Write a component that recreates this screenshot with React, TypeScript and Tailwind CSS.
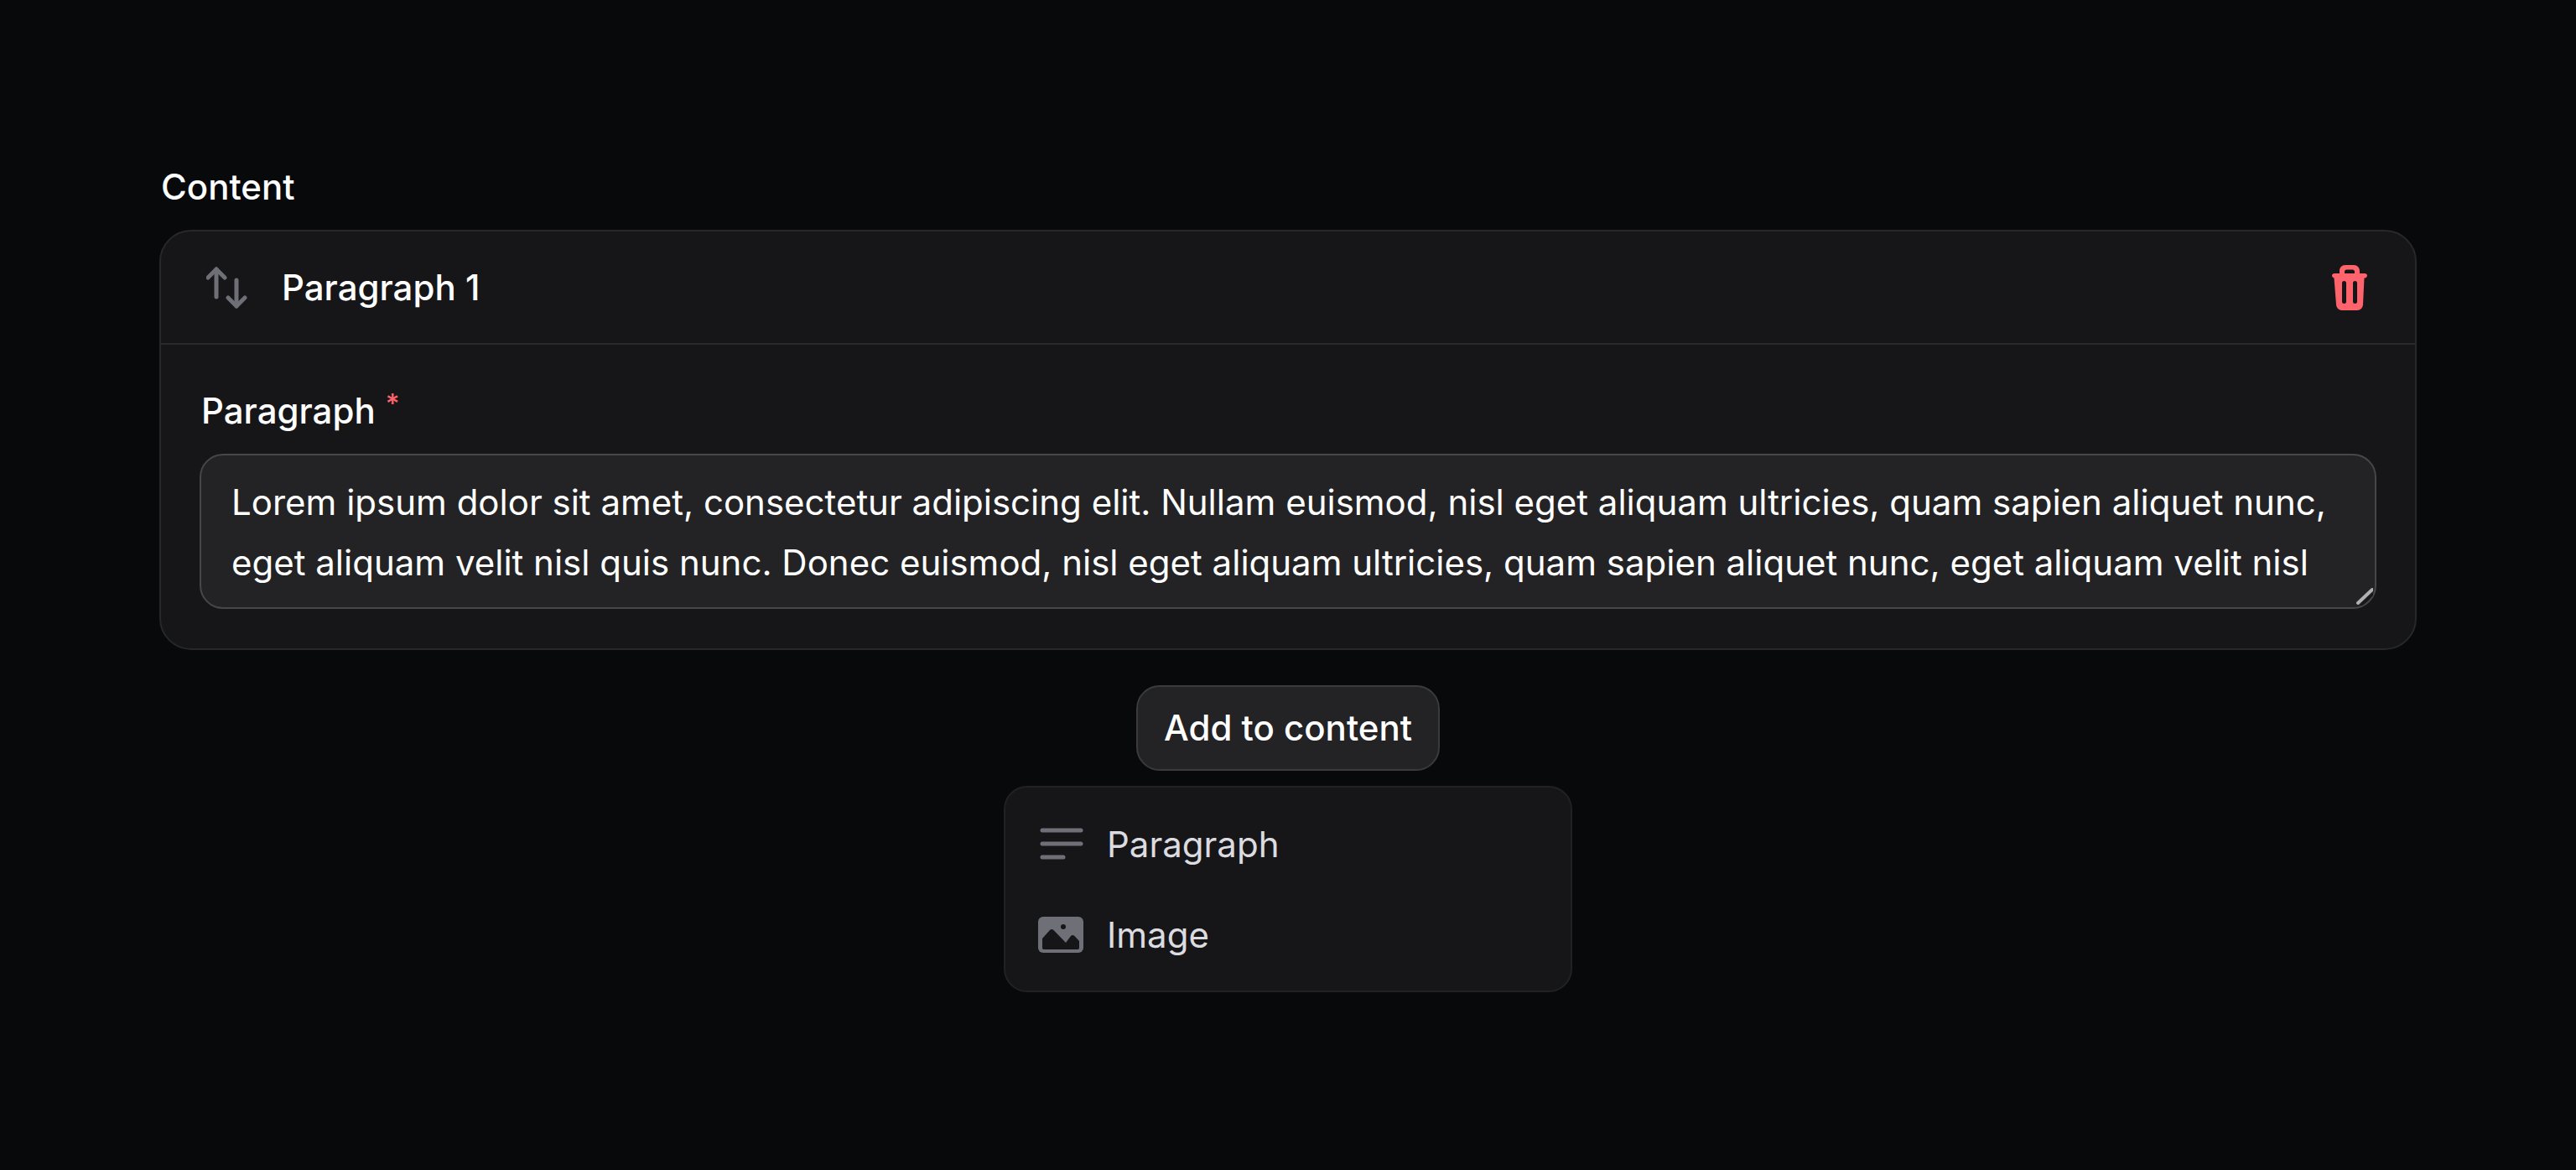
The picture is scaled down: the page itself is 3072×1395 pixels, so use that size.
const paragraphText =
  "Lorem ipsum dolor sit amet, consectetur adipiscing elit. Nullam euismod, nisl eget aliquam ultricies, quam sapien aliquet nunc, eget aliquam velit nisl quis nunc. Donec euismod, nisl eget aliquam ultricies, quam sapien aliquet nunc, eget aliquam velit nisl";

function SortIcon() {
  return (
    <svg width="50" height="50" viewBox="0 0 50 50" fill="none" stroke="#6f6f78" strokeWidth="5" strokeLinecap="round" strokeLinejoin="round">
      <path d="M12 3v33" />
      <path d="M2 13 12 3l10 10" />
      <path d="M36 16v31" />
      <path d="M26 37l10 10 10-10" />
    </svg>
  );
}

function TrashIcon() {
  return (
    <svg width="42" height="54" viewBox="0 0 42 54" fill="#ff636b">
      <path
        fillRule="evenodd"
        d="M9 10V7c0-4 3-7 7-7h10c4 0 7 3 7 7v3h6c1.700 0 3 1.100 3 2.600s-1.300 2.900-3 2.900h-.5L37 47c-.3 4-3 7-7 7H12c-4 0-6.700-3-7-7L2.500 15.500H3c-1.700 0-3-1.300-3-2.900S1.300 10 3 10h6Zm6 0h12V8c0-1.500-1-2.500-2.500-2.500h-7C16 5.500 15 6.500 15 8v2Zm-3 11.500a2.500 2.500 0 0 1 5 0v22a2.500 2.500 0 0 1-5 0v-22Zm13 0a2.500 2.500 0 0 1 5 0v22a2.500 2.500 0 0 1-5 0v-22Z"
      />
    </svg>
  );
}

function LinesIcon() {
  return (
    <svg width="54" height="44" viewBox="0 0 54 44" fill="none" stroke="#6f6f78" strokeWidth="5" strokeLinecap="round">
      <path d="M5 5h46" />
      <path d="M5 21h46" />
      <path d="M5 37h25" />
    </svg>
  );
}

function ImageIcon() {
  return (
    <svg width="54" height="44" viewBox="0 0 54 44">
      <rect width="54" height="43" rx="6" fill="#6f6f78" />
      <circle cx="30" cy="12" r="3" fill="#161619" />
      <path
        d="M5 26 14 16c1.500-1.500 3-1.500 4.500 0L33 31l6-8c1-1.500 3-1.500 4.500 0L49 29v8c0 1-.5 2-2 2H7c-1.500 0-2-1-2-2V26Z"
        fill="#161619"
      />
    </svg>
  );
}

export default function App() {
  return (
    <div className="min-h-screen bg-[#08090b] px-[190px] pt-[196px] font-['Inter',sans-serif] text-white">
      <p className="mb-[24px] pl-[2px] text-[42px] font-[460] leading-[54px]">Content</p>

      {/* Block card */}
      <div className="rounded-[38px] border-2 border-[#28282c] bg-[#161619]">
        <div className="flex h-[135px] items-center justify-between border-b-2 border-[#2a2a2e] pl-[54px] pr-[57px]">
          <div className="flex items-center gap-[40px]">
            <SortIcon />
            <span className="text-[42px] font-[460] leading-[54px]">Paragraph 1</span>
          </div>
          <TrashIcon />
        </div>

        <div className="px-[46px] pb-[47px] pt-[53px]">
          <label className="mb-[25px] flex items-start pl-[2px] text-[42px] font-[460] leading-[52px]">
            Paragraph
            <span className="ml-[12px] text-[32px] leading-[36px] text-[#ff636b]">*</span>
          </label>
          <div className="relative">
            <textarea
              readOnly
              value={paragraphText}
              rows={2}
              className="block h-[185px] w-full resize-none overflow-hidden rounded-[28px] border-2 border-[#47474a] bg-[#232325] px-[36px] py-[20px] text-[42px] leading-[72px] text-white outline-none"
            />
            <svg className="absolute bottom-[4px] right-[4px]" width="24" height="24" viewBox="0 0 24 24" fill="none" strokeLinecap="round">
              <path d="M10 23 24 10" stroke="#18181a" strokeWidth="3" />
              <path d="M6 21 23 5" stroke="#b0b0b2" strokeWidth="4" />
            </svg>
          </div>
        </div>
      </div>

      {/* Add block */}
      <div className="mt-[42px] flex flex-col items-center gap-[18px]">
        <button className="h-[102px] w-[362px] rounded-[28px] border-2 border-[#3b3b3e] bg-[#232325] text-[42px] font-[460] leading-[54px] text-white">
          Add to content
        </button>
        <div className="w-[678px] rounded-[28px] border-2 border-[#222226] bg-[#161619] pb-[38px] pl-[39px] pr-[39px] pt-[40px]">
          <div className="flex h-[56px] items-center gap-[28px] text-[42px] leading-[54px] text-[#dcdce0]">
            <LinesIcon />
            Paragraph
          </div>
          <div className="mt-[52px] flex h-[56px] items-center gap-[28px] text-[42px] leading-[54px] text-[#dcdce0]">
            <ImageIcon />
            Image
          </div>
        </div>
      </div>
    </div>
  );
}
